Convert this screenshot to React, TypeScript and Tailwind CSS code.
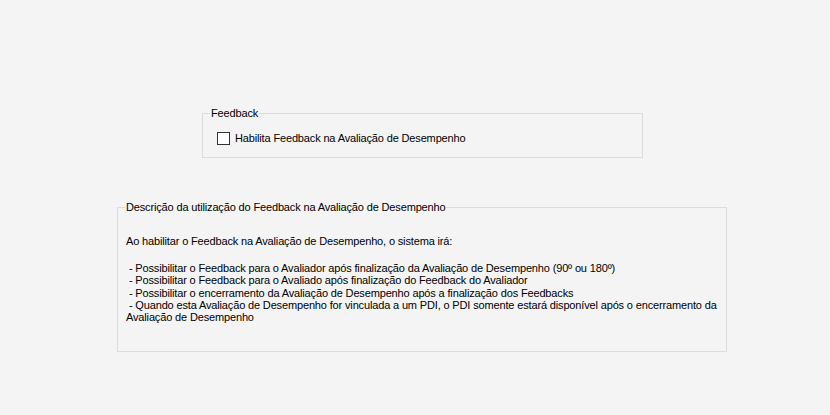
const lines = [
  ' - Possibilitar o Feedback para o Avaliador após finalização da Avaliação de Desempenho (90º ou 180º)',
  ' - Possibilitar o Feedback para o Avaliado após finalização do Feedback do Avaliador',
  ' - Possibilitar o encerramento da Avaliação de Desempenho após a finalização dos Feedbacks',
  ' - Quando esta Avaliação de Desempenho for vinculada a um PDI, o PDI somente estará disponível após o encerramento da',
  'Avaliação de Desempenho',
];

export default function App() {
  return (
    <div
      className="w-[830px] h-[415px] bg-[#f4f4f4] text-[11px] leading-[13px] tracking-[-0.15px] text-black overflow-hidden"
      style={{ fontFamily: '"Liberation Sans", Arial, sans-serif' }}
    >
      <div className="pt-[107px] pl-[202px]">
        <fieldset className="w-[441px] h-[51px] min-w-0 border border-[#dcdcdc] m-0 p-0">
          <legend className="ml-[7px] px-[1px]">Feedback</legend>
          <label className="flex items-center gap-[5px] ml-[14px] mt-[12px]">
            <span className="w-[13px] h-[13px] border border-[#333333] bg-white" />
            <span>Habilita Feedback na Avaliação de Desempenho</span>
          </label>
        </fieldset>
      </div>

      <div className="pt-[43px] pl-[117px]">
        <fieldset className="w-[610px] h-[151px] min-w-0 border border-[#dcdcdc] m-0 p-0">
          <legend className="ml-[7px] px-[1px]">Descrição da utilização do Feedback na Avaliação de Desempenho</legend>
          <div className="ml-[8px] mt-[21px] leading-[12px]">
            <p>Ao habilitar o Feedback na Avaliação de Desempenho, o sistema irá:</p>
            <div className="mt-[15px] leading-[12.3px] whitespace-pre">
              {lines.map((l, i) => (
                <div key={i}>{l}</div>
              ))}
            </div>
          </div>
        </fieldset>
      </div>
    </div>
  );
}
